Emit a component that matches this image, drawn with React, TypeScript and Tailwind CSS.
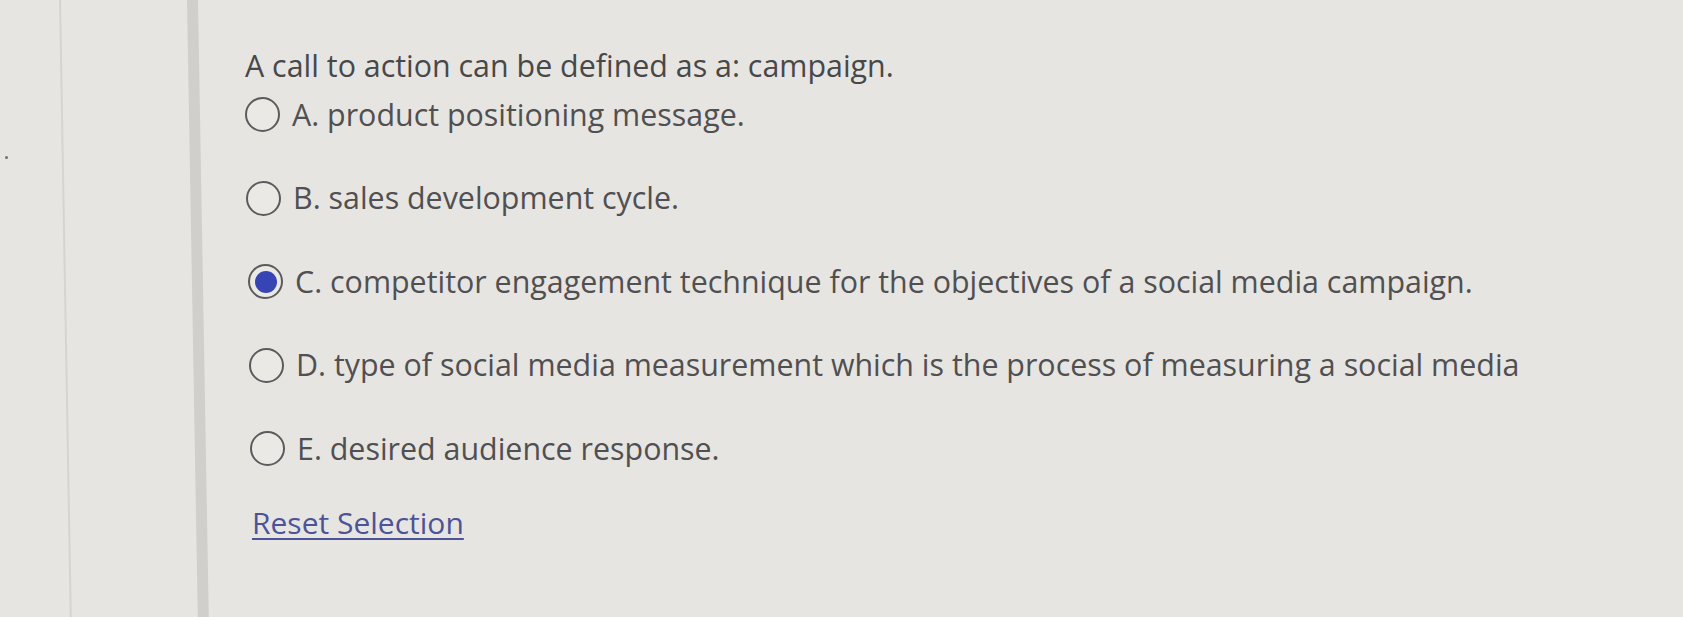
import { useState } from "react";

type Choice = { key: string; label: string; shift: string };

const choices: Choice[] = [
    { key: "A", label: "product positioning message.", shift: "ml-0" },
    { key: "B", label: "sales development cycle.", shift: "ml-[1px]" },
    { key: "C", label: "competitor engagement technique for the objectives of a social media campaign.", shift: "ml-[3px]" },
    { key: "D", label: "type of social media measurement which is the process of measuring a social media", shift: "ml-[4px]" },
    { key: "E", label: "desired audience response.", shift: "ml-[5px]" },
];

function Radio({ checked }: { checked: boolean }) {
    return (
        <span className="flex size-[35px] shrink-0 items-center justify-center rounded-full border-[2.5px] border-[#5b5b5d] bg-[#ebe9e6]">
            {checked && <span className="size-[22px] rounded-full bg-[#3644b4]" />}
        </span>
    );
}

export default function App() {
    const [selected, setSelected] = useState<string | null>("C");

    return (
        <div className="flex h-[617px] w-full overflow-hidden bg-[#e7e5e1] font-['Open_Sans',sans-serif] text-[#505052]">
            {/* left gutter, slightly leaning like the photo */}
            <div className="relative w-[187px] shrink-0">
                <div className="absolute top-0 bottom-0 left-[59px] w-[2px] origin-top skew-x-[1deg] bg-[#d6d4d0]" />
                <div className="absolute top-[156px] left-[5px] size-[3px] rounded-full bg-[#707070]" />
            </div>
            <div className="w-[11px] shrink-0 origin-top skew-x-[1deg] bg-[#d1cfcc]" />

            <div className="flex-1 pt-[46px] pl-[47px]">
                <p className="text-[30.4px] leading-[40px] text-[#48484a]">A call to action can be defined as a: campaign.</p>

                <div className="mt-[-13px] flex flex-col">
                    {choices.map((c) => (
                        <label
                            key={c.key}
                            className={`flex h-[83.5px] cursor-pointer items-center gap-[12px] ${c.shift}`}
                            onClick={() => setSelected(c.key)}
                        >
                            <Radio checked={selected === c.key} />
                            <span className="text-[30.4px] leading-[40px] whitespace-nowrap">
                                {c.key}. {c.label}
                            </span>
                        </label>
                    ))}
                </div>

                <button
                    type="button"
                    className="mt-[12px] ml-[7px] text-[30px] leading-[40px] text-[#4c5398] underline decoration-[2px] underline-offset-[4px]"
                    onClick={() => setSelected(null)}
                >
                    Reset Selection
                </button>
            </div>
        </div>
    );
}
